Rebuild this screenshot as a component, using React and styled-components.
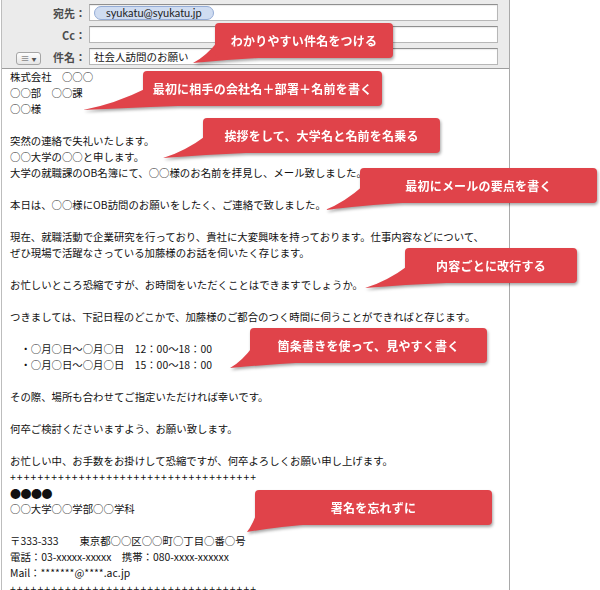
import styled, { createGlobalStyle } from "styled-components";

const GlobalStyle = createGlobalStyle`
  html, body {
    margin: 0;
    padding: 0;
    background: #ffffff;
  }
  body {
    font-family: "Noto Sans CJK JP", "Noto Sans", sans-serif;
  }
`;

const CALLOUT_H = 35;

const callouts = [
  { x: 215, y: 23, w: 178, tip: [193, 63], text: "わかりやすい件名をつける" },
  { x: 143, y: 71, w: 239, tip: [83, 110], text: "最初に相手の会社名＋部署＋名前を書く" },
  { x: 203, y: 118, w: 237, tip: [163, 158], text: "挨拶をして、大学名と名前を名乗る" },
  { x: 360, y: 168, w: 237, tip: [325, 210], text: "最初にメールの要点を書く" },
  { x: 405, y: 248, w: 172, tip: [365, 288], text: "内容ごとに改行する" },
  { x: 250, y: 328, w: 237, tip: [230, 368], text: "箇条書きを使って、見やすく書く" },
  { x: 255, y: 490, w: 237, tip: [247, 532], text: "署名を忘れずに" },
];

const PLUS = "+".repeat(36);

const lines = [
  "株式会社　○○○",
  "○○部　○○課",
  "○○様",
  "",
  "突然の連絡で失礼いたします。",
  "○○大学の○○と申します。",
  "大学の就職課のOB名簿にて、○○様のお名前を拝見し、メール致しました。",
  "",
  "本日は、○○様にOB訪問のお願いをしたく、ご連絡で致しました。",
  "",
  "現在、就職活動で企業研究を行っており、貴社に大変興味を持っております。仕事内容などについて、",
  "ぜひ現場で活躍なさっている加藤様のお話を伺いたく存じます。",
  "",
  "お忙しいところ恐縮ですが、お時間をいただくことはできますでしょうか。",
  "",
  "つきましては、下記日程のどこかで、加藤様のご都合のつく時間に伺うことができればと存じます。",
  "",
  "　・○月○日〜○月○日　12：00〜18：00",
  "　・○月○日〜○月○日　15：00〜18：00",
  "",
  "その際、場所も合わせてご指定いただければ幸いです。",
  "",
  "何卒ご検討くださいますよう、お願い致します。",
  "",
  "お忙しい中、お手数をお掛けして恐縮ですが、何卒よろしくお願い申し上げます。",
  PLUS,
  "●●●●",
  "○○大学○○学部○○学科",
  "",
  "〒333-333　　東京都○○区○○町○丁目○番○号",
  "電話：03-xxxxx-xxxxx　携帯：080-xxxx-xxxxxx",
  "Mail：*******@****.ac.jp",
  PLUS,
];

const Callout = ({ x, y, w, tip, children }) => {
  const h = CALLOUT_H;
  const tx = tip[0] - x;
  const ty = tip[1] - y;
  // tail wedge from the bottom-left of the box to the tip
  const d = `M 4 ${h - 18} Q ${tx / 2 + 2} ${(h - 18 + ty) / 2 + 5} ${tx} ${ty} Q ${(tx + 62) / 2} ${h + 1} 62 ${h - 1} Z`;
  return (
    <CalloutWrap $x={x} $y={y} $w={w}>
      <Tail>
        <path d={d} fill="#e0434a" />
      </Tail>
      <CalloutBox>{children}</CalloutBox>
    </CalloutWrap>
  );
};

const App = () => {
  return (
    <>
      <GlobalStyle />
      <Page>
        <MailWindow>
          <Header>
            <FieldRow>
              <Label>宛先：</Label>
              <Field>
                <Token>syukatu@syukatu.jp</Token>
              </Field>
            </FieldRow>
            <FieldRow>
              <Label>Cc：</Label>
              <Field />
            </FieldRow>
            <FieldRow>
              <Label>
                <MenuButton>
                  ≡ <small>▼</small>
                </MenuButton>
                件名：
              </Label>
              <Field>社会人訪問のお願い</Field>
            </FieldRow>
          </Header>
          <Body>
            {lines.map((l, i) => (
              <Line key={i} $dots={l === "●●●●"} $plus={l === PLUS}>
                {l}
              </Line>
            ))}
          </Body>
        </MailWindow>
        {callouts.map((c) => (
          <Callout key={c.text} x={c.x} y={c.y} w={c.w} tip={c.tip}>
            {c.text}
          </Callout>
        ))}
      </Page>
    </>
  );
};

const Page = styled.div`
  position: relative;
  width: 600px;
  height: 590px;
  overflow: hidden;
  background: #ffffff;
`;

const MailWindow = styled.div`
  width: 507px;
  height: 590px;
  margin-left: 1px;
  border-left: 1px solid #bdbdbd;
  border-right: 1px solid #a9a9a9;
  display: flex;
  flex-direction: column;
  background: #ffffff;
`;

const Header = styled.div`
  flex-shrink: 0;
  height: 64px;
  padding-top: 4px;
  background: #ebebeb;
  border-bottom: 1px solid #9d9d9d;
  display: flex;
  flex-direction: column;
  gap: 5px;
`;

const FieldRow = styled.div`
  display: grid;
  grid-template-columns: 87px 1fr;
  height: 17px;
  margin-right: 11px;
`;

const Label = styled.div`
  display: flex;
  align-items: center;
  justify-content: flex-end;
  padding-right: 3px;
  white-space: nowrap;
  font-size: 11px;
  font-weight: 700;
  color: #4d4d4d;
`;

const MenuButton = styled.div`
  width: 25px;
  height: 13px;
  box-sizing: border-box;
  margin-right: auto;
  margin-left: 14px;
  margin-top: 3px;
  border: 1px solid #a5a5a5;
  border-radius: 3px;
  background: linear-gradient(#fdfdfd, #e6e6e6);
  display: flex;
  align-items: center;
  justify-content: center;
  gap: 2px;
  font-size: 9px;
  font-weight: 400;
  line-height: 1;
  color: #555;

  small {
    font-size: 5px;
  }
`;

const Field = styled.div`
  display: flex;
  align-items: center;
  box-sizing: border-box;
  height: 17px;
  padding-left: 4px;
  background: #ffffff;
  border: 1px solid #b7b7b7;
  border-top-color: #8f8f8f;
  box-shadow: inset 0 1px 1px rgba(0, 0, 0, 0.08);
  font-size: 10.5px;
  color: #151515;
`;

const Token = styled.span`
  display: inline-flex;
  align-items: center;
  height: 12px;
  padding: 0 11px;
  border: 1px solid #94acd6;
  border-radius: 7px;
  background: #cfdcf1;
  font-family: "Lato", "Noto Sans", sans-serif;
  font-size: 11px;
  color: #1d1d1d;
`;

const Body = styled.div`
  flex: 1;
  padding: 0 8px;
  font-size: 10.4px;
  line-height: 16px;
  color: #111111;
`;

const Line = styled.div`
  min-height: 16px;
  white-space: pre;
  font-size: ${(p) => (p.$dots ? "11px" : "inherit")};
  letter-spacing: ${(p) => (p.$dots ? "-0.5px" : p.$plus ? "1.1px" : "normal")};
`;

const CalloutWrap = styled.div`
  position: absolute;
  left: ${(p) => p.$x}px;
  top: ${(p) => p.$y}px;
  width: ${(p) => p.$w}px;
  height: ${CALLOUT_H}px;
  filter: drop-shadow(1px 2px 1.5px rgba(0, 0, 0, 0.35));
`;

const Tail = styled.svg`
  position: absolute;
  left: 0;
  top: 0;
  width: 1px;
  height: 1px;
  overflow: visible;
`;

const CalloutBox = styled.div`
  position: relative;
  height: 100%;
  border-radius: 4px;
  background: #e0434a;
  display: flex;
  align-items: center;
  justify-content: center;
  font-size: 12px;
  font-weight: 700;
  color: #ffffff;
  letter-spacing: 0.2px;
`;

export default App;
